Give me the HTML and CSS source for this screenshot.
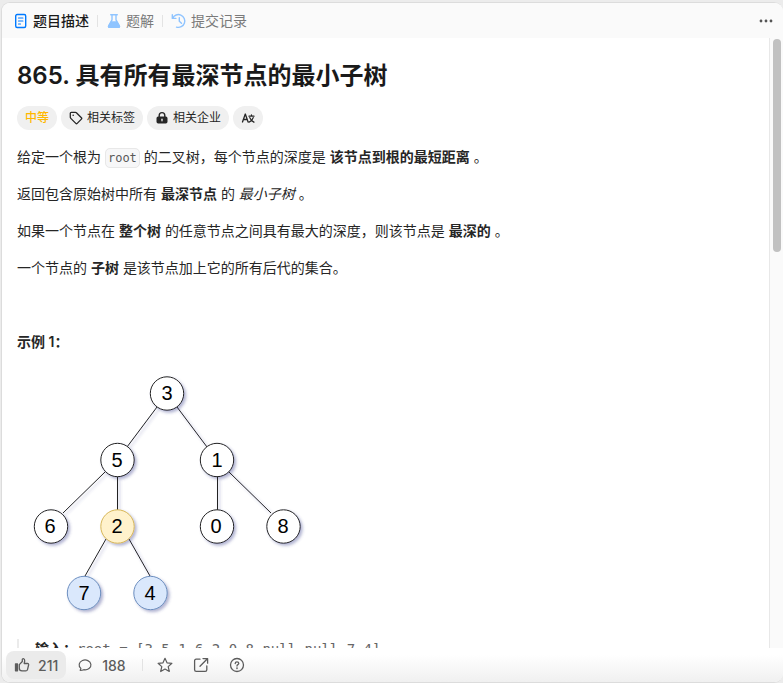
FILE: index.html
```html
<!DOCTYPE html>
<html lang="zh-CN">
<head>
<meta charset="utf-8">
<meta name="viewport" content="width=device-width, initial-scale=1">
<title>865. 具有所有最深节点的最小子树</title>
<link rel="stylesheet" href="styles.css">
</head>
<body>
<main class="card">
  <header class="tabs">
    <button class="tab tab-active" type="button">
      <svg class="tab-icon" viewBox="0 0 16 16" fill="none" stroke="#007aff" stroke-width="1.4" stroke-linecap="round"><rect x="2.700" y="1.500" width="10" height="13" rx="1.500"/><path d="M5.500 5h4.400M5.500 8h4.400M5.500 11h2" stroke-width="1.200"/></svg>
      题目描述
    </button>
    <span class="divider"></span>
    <button class="tab" type="button">
      <svg class="tab-icon" viewBox="0 0 16 16" fill="none" stroke="#8fc4ff" stroke-width="1.4" stroke-linejoin="round" stroke-linecap="round"><path d="M4.7 1.8h6.6M6 1.8v5L2.6 13q-.4 1.2.8 1.2h9.200q1.200 0 .8-1.200L10 6.800v-5"/><path d="M5 9h6l2.400 4.200q.2 1-.8 1H3.400q-1 0-.8-1z" fill="#8fc4ff"/></svg>
      题解
    </button>
    <span class="divider"></span>
    <button class="tab" type="button">
      <svg class="tab-icon" viewBox="0 0 16 16" fill="none" stroke="#8fc4ff" stroke-width="1.4" stroke-linecap="round" stroke-linejoin="round"><path d="M1.300 1.800v3.600h3.600M1.600 5.200A6.400 6.400 0 1 1 5.500 14.100M8.300 4.800v3.500l2.200 2"/></svg>
      提交记录
    </button>
    <button class="more" type="button" aria-label="更多">
      <svg class="more-icon" viewBox="0 0 14 14" fill="#555"><circle cx="2" cy="7" r="1.400"/><circle cx="7" cy="7" r="1.400"/><circle cx="12" cy="7" r="1.400"/></svg>
    </button>
  </header>

  <div class="viewport">
    <article class="content">
      <h1 class="title">865. 具有所有最深节点的最小子树</h1>
      <div class="pills">
        <span class="pill pill-medium">中等</span>
        <button class="pill" type="button">
          <svg class="pill-icon" viewBox="0 0 14 14" fill="none" stroke="#262626" stroke-width="1.300" stroke-linejoin="round"><path d="M1.300 2.300q0-1 1-1h4.200q.5 0 .9.400l5 5q.7.700 0 1.400l-4.200 4.300q-.7.700-1.400 0l-5-5q-.5-.5-.5-1.100z"/><circle cx="4.200" cy="4.200" r=".8" fill="#262626" stroke="none"/></svg>
          相关标签
        </button>
        <button class="pill" type="button">
          <svg class="pill-icon" viewBox="0 0 14 14"><path d="M4.200 6V4.400a2.800 2.800 0 0 1 5.600 0V6" fill="none" stroke="#262626" stroke-width="1.400"/><path d="M3.200 5.600h7.600q1.700 0 1.700 1.700v3.400q0 1.700-1.700 1.700H3.200q-1.700 0-1.700-1.700V7.300q0-1.700 1.700-1.700z" fill="#262626"/><path d="M7 8.200v1.600" stroke="#eee" stroke-width="1.300" stroke-linecap="round"/></svg>
          相关企业
        </button>
        <button class="pill" type="button" aria-label="切换语言">
          <svg class="pill-icon" viewBox="0 0 14 14" fill="none" stroke="#262626" stroke-width="1.300" stroke-linecap="round" stroke-linejoin="round"><path d="M1.500 11 4.300 3l2.800 8M2.400 8.500h3.800M8 5.200h5M10.500 3.900v1.300M8.800 6.600c.7 2.100 2.100 3.700 4.100 4.600M12.200 6.600c-.6 2.200-2 3.800-4.100 4.600"/></svg>
        </button>
      </div>

      <div class="description">
        <p>给定一个根为 <code class="inline-code">root</code> 的二叉树，每个节点的深度是 <strong>该节点到根的最短距离</strong> 。</p>
        <p>返回包含原始树中所有 <strong>最深节点</strong> 的 <em>最小子树</em> 。</p>
        <p>如果一个节点在 <strong>整个树</strong> 的任意节点之间具有最大的深度，则该节点是 <strong>最深的</strong> 。</p>
        <p>一个节点的 <strong>子树</strong> 是该节点加上它的所有后代的集合。</p>
        <p>&nbsp;</p>
        <p><strong>示例 1：</strong></p>
        <svg class="tree" viewBox="0 0 300 251" role="img" aria-label="二叉树示例">
          <defs>
            <filter id="shadow" x="-20%" y="-20%" width="150%" height="150%">
              <feDropShadow dx="2" dy="2" stdDeviation="1.500" flood-color="#3d4590" flood-opacity=".4"/>
            </filter>
          </defs>
          <g transform="translate(0 1)">
            <g filter="url(#shadow)">
              <g stroke="#222" stroke-width="1">
                <path d="M140 38 110 78M160 38l30 40M88 103l-42 41M100.500 107v34M200.500 107v34M212 103l42 41M89 170l-21 37M112 170l21 37"/>
              </g>
              <g fill="#fff" stroke="#222" stroke-width="1">
                <circle cx="150" cy="24.500" r="16.700"/>
                <circle cx="100.500" cy="91" r="16.700"/>
                <circle cx="200" cy="91" r="16.700"/>
                <circle cx="34" cy="157.500" r="16.700"/>
                <circle cx="200" cy="157.500" r="16.700"/>
                <circle cx="266.500" cy="157.500" r="16.700"/>
                <circle cx="100.500" cy="157.500" r="16.700" fill="#fff2cc" stroke="#d6b656"/>
                <circle cx="67" cy="224" r="16.700" fill="#dae8fc" stroke="#6c8ebf"/>
                <circle cx="133.500" cy="224" r="16.700" fill="#dae8fc" stroke="#6c8ebf"/>
              </g>
            </g>
            <g class="tree-labels">
              <text x="150" y="31">3</text>
              <text x="100" y="98">5</text>
              <text x="200" y="98">1</text>
              <text x="33" y="164">6</text>
              <text x="100" y="164">2</text>
              <text x="199" y="164">0</text>
              <text x="266" y="164">8</text>
              <text x="67" y="231">7</text>
              <text x="133" y="231">4</text>
            </g>
          </g>
        </svg>
        <pre class="example"><strong>输入：</strong>root = [3,5,1,6,2,0,8,null,null,7,4]</pre>
      </div>
    </article>
    <div class="scroll-track"><div class="scroll-thumb"></div></div>
  </div>

  <footer class="actions">
    <button class="action action-like" type="button">
      <svg class="action-icon" viewBox="0 0 16 16" fill="none" stroke="#5c5c5c" stroke-width="1.300" stroke-linejoin="round"><path d="M1.500 7h2v6.800h-2z" fill="#5c5c5c"/><path d="M5.300 7.600 8.300 4.500V2.600q0-1 1-.9 1.600.3 1.400 2.300L10.200 6.500h3.200q1.500.1 1.200 1.500l-1.100 4.600q-.4 1.300-1.700 1.300H8q-2.700-.1-2.700-2.600z"/></svg>
      211
    </button>
    <button class="action" type="button">
      <svg class="action-icon" viewBox="0 0 16 16" fill="none" stroke="#5c5c5c" stroke-width="1.200" stroke-linejoin="round"><path d="M2.200 13.300 2.900 11.400A5.900 4.900 0 1 1 5.800 12.700Q4.200 13.300 2.200 13.300z"/></svg>
      188
    </button>
    <span class="divider"></span>
    <button class="action action-square" type="button" aria-label="收藏">
      <svg class="action-icon" viewBox="0 0 16 16" fill="none" stroke="#5c5c5c" stroke-width="1.200" stroke-linejoin="round"><path d="m8 1.300 2 4.500 4.900.5-3.700 3.300 1.100 4.900L8 12l-4.300 2.500 1.100-4.900L1.100 6.300 6 5.800z"/></svg>
    </button>
    <button class="action action-square" type="button" aria-label="分享">
      <svg class="action-icon" viewBox="0 0 16 16" fill="none" stroke="#5c5c5c" stroke-width="1.300" stroke-linecap="round" stroke-linejoin="round"><path d="M7 2.200H3.200Q1.600 2.200 1.600 3.800v9q0 1.600 1.600 1.600h9q1.600 0 1.600-1.600V9M10 1.600h4.600v4.600M14.400 1.800 7 9.200"/></svg>
    </button>
    <button class="action action-square" type="button" aria-label="帮助">
      <svg class="action-icon" viewBox="0 0 16 16" fill="none" stroke="#5c5c5c" stroke-width="1.300" stroke-linecap="round"><circle cx="8" cy="8" r="6.500"/><path d="M6.200 6.500q.1-1.700 1.800-1.700t1.800 1.500q0 .8-.9 1.300T8 9"/><circle cx="8" cy="11.200" r=".3"/></svg>
    </button>
  </footer>
</main>
</body>
</html>
```
FILE: styles.css
```css
* {
  box-sizing: border-box;
}

body {
  margin: 0;
  height: 100vh;
  padding: 2px 0 0 1px;
  background: #ececec;
  color: #262626;
  font: 14px/21px Inter, "Noto Sans CJK SC", sans-serif;
}

button {
  border: 0;
  background: none;
  padding: 0;
  color: inherit;
  font: inherit;
}

svg {
  display: block;
  flex: none;
}

.card {
  display: flex;
  flex-direction: column;
  height: 100%;
  border: 1px solid #dcdcdc;
  border-right: 0;
  border-radius: 9px;
  background: #fff;
  overflow: hidden;
}

.tabs {
  display: flex;
  flex: none;
  align-items: center;
  height: 35px;
  padding: 0 10px 0 11px;
  background: #fafafa;
}

.tab {
  display: flex;
  align-items: center;
  gap: 4px;
  color: #7a7a7a;
}

.tab-active {
  color: #1a1a1a;
  font-weight: 500;
}

.tab-icon,
.action-icon {
  width: 16px;
  height: 16px;
}

.divider {
  width: 1px;
  height: 12px;
  margin: 0 8px;
  background: #e3e3e3;
}

.more {
  margin-left: auto;
}

.more-icon {
  width: 14px;
  height: 14px;
}

.viewport {
  display: flex;
  flex: 1;
  min-height: 0;
}

.content {
  flex: 1;
  min-width: 0;
  padding: 22px 15px;
  overflow: hidden;
}

.title {
  margin: 0;
  color: #1a1a1a;
  font-size: 24px;
  font-weight: 600;
  line-height: 32px;
}

.pills {
  display: flex;
  gap: 4px;
  margin: 14px 0 16px;
}

.pill {
  display: flex;
  align-items: center;
  gap: 4px;
  height: 24px;
  padding: 0 8px;
  border-radius: 12px;
  background: #f0f0f0;
  font-size: 12px;
  line-height: 18px;
}

.pill-medium {
  color: #ffb800;
  font-weight: 500;
}

.pill-icon {
  width: 14px;
  height: 14px;
}

.description p {
  margin: 0 0 16px;
}

.inline-code {
  padding: 2px;
  border: 1px solid #e8e8e8;
  border-radius: 5px;
  background: #f7f7f8;
  color: #595959;
  font: 12px/16px "DejaVu Sans Mono", monospace;
}

strong {
  font-weight: 600;
}

.tree {
  width: 300px;
  height: 251px;
}

.tree-labels {
  fill: #000;
  font: 20px "Liberation Sans", sans-serif;
  text-anchor: middle;
}

.example {
  margin: 20px 0 16px;
  padding-left: 16px;
  border-left: 2px solid #ebebeb;
  color: #666;
  font: 14px/21px "DejaVu Sans Mono", "Noto Sans CJK SC", monospace;
}

.example strong {
  color: #262626;
}

.scroll-track {
  flex: none;
  width: 14px;
  padding: 1px 2px 0 3px;
  border-left: 1px solid #e8e8e8;
  background: #fafafa;
}

.scroll-thumb {
  height: 35%;
  border-radius: 4px;
  background: #c1c1c1;
}

.actions {
  display: flex;
  flex: none;
  align-items: center;
  height: 34px;
  padding: 0 4px;
  background: linear-gradient(#fff, #fff 20%, #f0f0f0);
  color: #5c5c5c;
}

.action {
  display: flex;
  align-items: center;
  gap: 8px;
  height: 28px;
  padding: 0 8px;
  border-radius: 8px;
  font-weight: 500;
}

.action-like {
  margin-right: 4px;
  background: #ebebeb;
}

.actions .divider {
  margin: 0 4px 0 8px;
}

.action-square {
  padding: 0 10px;
}
```
